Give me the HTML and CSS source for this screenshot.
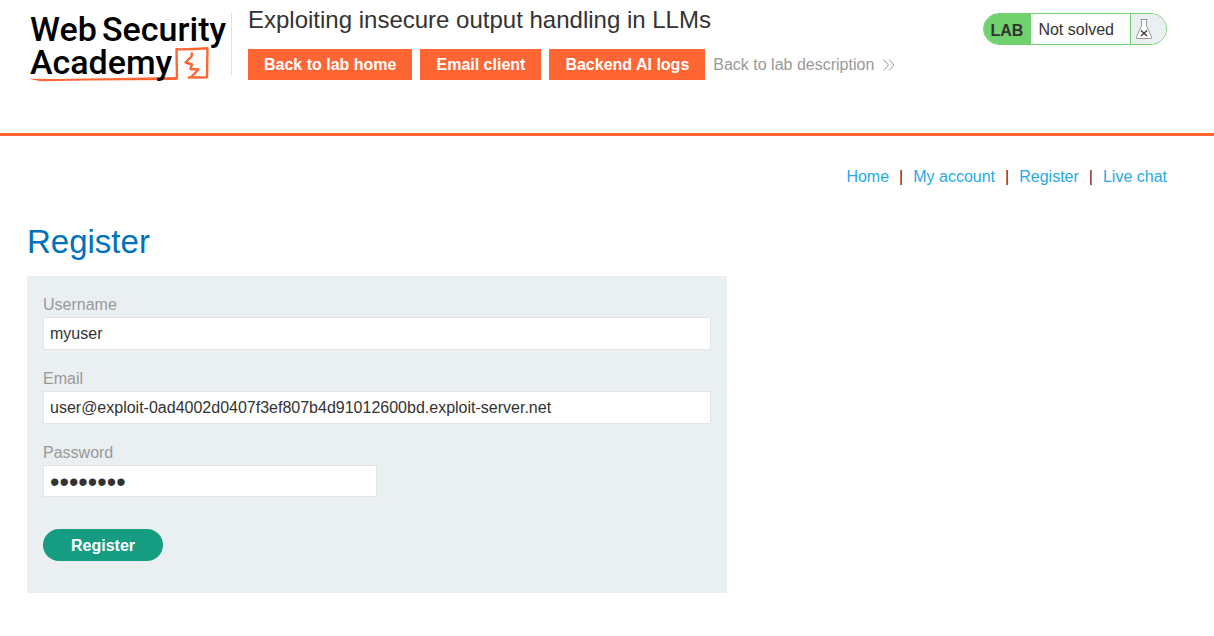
FILE: index.html
```html
<!DOCTYPE html>
<html lang="en">
<head>
<meta charset="utf-8">
<meta name="viewport" content="width=device-width, initial-scale=1">
<title>Exploiting insecure output handling in LLMs</title>
<link rel="stylesheet" href="styles.css">
</head>
<body>
<header class="lab-header">
  <div class="container header-row">
    <a class="logo" href="#" aria-label="Web Security Academy">
      <svg width="202" height="72" viewBox="0 0 202 72">
        <path d="M1 65.700 L30 65.900 L150 64 V67 L60 67.400 L14 68.200 Z" fill="#ff6633"/>
        <g fill="none" stroke="#ff6633" stroke-linejoin="round" stroke-width="2.400">
          <path d="M150 66 L149.500 36.300 Q165 36.500 180.500 35.300 L180 64.300 L161 64.500"/>
          <path d="M165 39.500 L164.500 43.500 L158.500 49.500 L165 51.500 L163.500 56 L171.500 56.500 L164.500 63.500"/>
        </g>
        <g class="logo-text">
          <text x="3" y="28">Web</text>
          <text x="75" y="28">Security</text>
          <text x="3" y="61">Academy</text>
        </g>
      </svg>
    </a>
    <div class="title-area">
      <h2 class="lab-title">Exploiting insecure output handling in LLMs</h2>
      <nav class="lab-links">
        <a class="lab-button" href="#">Back to lab home</a>
        <a class="lab-button" href="#">Email client</a>
        <a class="lab-button" href="#">Backend AI logs</a>
        <a class="back-link" href="#">Back to lab description
          <svg width="12" height="12" viewBox="0 0 12 12" fill="none" stroke="#999" stroke-width="1"><path d="M0.500 0.500 L5.500 6 L0.500 11.500 M6 0.500 L11 6 L6 11.500"/></svg>
        </a>
      </nav>
    </div>
    <div class="status">
      <span class="status-tag">LAB</span>
      <span class="status-text">Not solved</span>
      <span class="status-icon">
        <svg width="16" height="20" viewBox="0 0 16 20" fill="none">
          <path d="M5.500 0.500 V7 L0.500 17 V19.500 H15.500 V17 L10.500 7 V0.500 Z" fill="#fff"/>
          <path d="M4.500 0.500 H11.500 M5.500 0.500 V7 L0.500 17.500 V19.500 H15.500 V17.500 L10.500 7 V0.500" stroke="#999"/>
          <path d="M5 11.500 L11 17 M11 11.500 L5 17" stroke="#333332" stroke-width="1.300"/>
        </svg>
      </span>
    </div>
  </div>
</header>
<main class="container">
  <nav class="top-links">
    <a href="#">Home</a><span>|</span><a href="#">My account</a><span>|</span><a href="#">Register</a><span>|</span><a href="#">Live chat</a>
  </nav>
  <h1 class="page-title">Register</h1>
  <form class="register-form">
    <label for="username">Username</label>
    <input id="username" type="text" value="myuser">
    <label for="email">Email</label>
    <input id="email" type="email" value="user@exploit-0ad4002d0407f3ef807b4d91012600bd.exploit-server.net">
    <label for="password">Password</label>
    <input id="password" class="half" type="password" value="password">
    <button class="submit" type="submit">Register</button>
  </form>
</main>
</body>
</html>
```
FILE: styles.css
```css
* {
  box-sizing: border-box;
}

body {
  margin: 0;
  background: #fff;
  color: #333332;
  font: 16px/24px "Liberation Sans", Arial, sans-serif;
}

a {
  text-decoration: none;
}

.container {
  margin: 0 47px 0 27px;
}

.lab-header {
  padding-bottom: 48px;
  border-bottom: 3px solid #ff6633;
}

.header-row {
  display: flex;
  align-items: flex-start;
  padding-top: 13px;
}

.logo {
  padding-right: 3px;
  line-height: 0;
  background: linear-gradient(#e0e0e0, #e0e0e0) right top / 1px 62px no-repeat;
}

.logo svg {
  overflow: visible;
}

.logo-text {
  font-family: Roboto, "Open Sans", sans-serif;
  font-size: 34px;
  font-weight: 500;
  fill: #000;
}

.title-area {
  flex: 1;
  margin-left: 16px;
}

.lab-title {
  margin: -7px 0 15px;
  font-size: 24px;
  font-weight: 400;
  line-height: 28px;
}

.lab-links {
  display: flex;
  flex-wrap: wrap;
  align-items: center;
  gap: 8px;
}

.lab-button {
  padding: 0 16px;
  background: #ff6633;
  color: #fff;
  font-weight: 700;
  line-height: 31px;
}

.back-link {
  display: flex;
  align-items: center;
  gap: 9px;
  color: #999;
}

.status {
  display: flex;
  height: 32px;
  overflow: hidden;
  border: 1px solid #70d16e;
  border-radius: 16px;
  line-height: 31px;
}

.status-tag {
  padding: 1px 8px 0 7px;
  background: #70d16e;
  font-weight: 700;
}

.status-text {
  padding: 0 16px 0 7px;
}

.status-icon {
  display: flex;
  align-items: center;
  width: 36px;
  padding-left: 5px;
  border-left: 1px solid #70d16e;
  background: #eaeff2;
}

.top-links {
  display: flex;
  justify-content: flex-end;
  gap: 10px;
  padding-top: 29px;
}

.top-links a {
  color: #29a9e1;
}

.top-links span {
  color: #4b1f3a;
}

.page-title {
  margin: 32px 0 13px;
  color: #0071bc;
  font-size: 33px;
  font-weight: 400;
  line-height: 42px;
}

.register-form {
  max-width: 700px;
  padding: 17px 16px 32px;
  background: #eaeff2;
}

.register-form label {
  display: block;
  color: #999;
}

.register-form input {
  display: block;
  width: 100%;
  height: 33px;
  margin-bottom: 17px;
  padding: 0 6px;
  border: 1px solid #e4e4e4;
  background: #fff;
  color: #333332;
  font: inherit;
}

.register-form .half {
  width: 50%;
  height: 32px;
  padding-top: 2px;
  font-size: 27px;
}

.submit {
  display: block;
  margin-top: 32px;
  padding: 1px 28px 0;
  border: 0;
  border-radius: 16px;
  background: #169c80;
  color: #fff;
  font: inherit;
  font-weight: 700;
  line-height: 31px;
}
```
